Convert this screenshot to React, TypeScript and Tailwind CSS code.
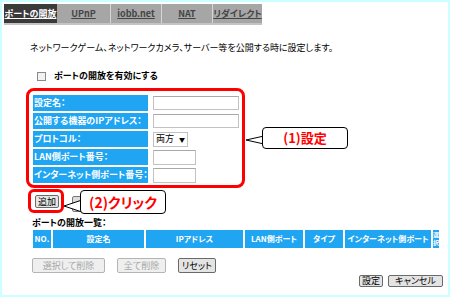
export default function App() {
  const rows = [
    { label: "設定名：", kind: "long" },
    { label: "公開する機器のIPアドレス：", kind: "long" },
    { label: "プロトコル：", kind: "select" },
    { label: "LAN側ポート番号：", kind: "short" },
    { label: "インターネット側ポート番号：", kind: "short" },
  ];
  return (
    <div className="relative w-[450px] h-[297px] overflow-hidden border-2 border-[#ccffff] bg-white text-black font-['Noto_Sans_CJK_JP',sans-serif] [font-feature-settings:'palt']">
      {/* tab bar */}
      <div className="mt-[2px] ml-[2px] w-[258px] h-[21px] flex bg-[#a6a6a6] border-b-2 border-[#c4c4c4] text-[9px] font-bold leading-[19px] whitespace-nowrap">
        <div className="w-[53px] bg-[#3a3a3a] text-white underline text-center">ポートの開放</div>
        <div className="w-[54px] text-center text-[#444] underline border-r border-[#d6d6d6]">UPnP</div>
        <div className="w-[51px] text-center text-[#444] underline border-r border-[#d6d6d6]">iobb.net</div>
        <div className="w-[51px] text-center text-[#444] underline border-r border-[#d6d6d6]">NAT</div>
        <div className="flex-1 text-center text-[#444] underline">リダイレクト</div>
      </div>

      <div className="mt-[17px] ml-[28px] text-[9px] leading-[12px]">
        ネットワークゲーム、ネットワークカメラ、サーバー等を公開する時に設定します。
      </div>

      <div className="mt-[16px] ml-[35px] flex items-center h-[12px] gap-[8px]">
        <div className="w-[9px] h-[9px] border border-[#8a8a8a] bg-[#f2f2f2]" />
        <span className="text-[9px] font-bold">ポートの開放を有効にする</span>
      </div>

      <div className="mt-[13px] ml-[31px] flex flex-col gap-[2px]">
        {rows.map((r) => (
          <div key={r.label} className="flex items-center h-[16px] gap-[5px]">
            <div className="w-[115px] h-[16px] bg-[#1fa5f2] text-white text-[9px] font-bold leading-[16px] pl-[1px] whitespace-nowrap">
              {r.label}
            </div>
            {r.kind === "long" && (
              <div className="w-[86px] h-[14px] border border-[#c2c2c2] border-t-[#a8a8a8] bg-white" />
            )}
            {r.kind === "short" && (
              <div className="w-[43px] h-[15px] border border-[#c2c2c2] border-t-[#a8a8a8] bg-white" />
            )}
            {r.kind === "select" && (
              <div className="w-[35px] h-[15px] border border-[#c2c2c2] bg-white flex items-center justify-between px-[2px] text-[9px]">
                <span>両方</span>
                <span className="text-[6px]">▼</span>
              </div>
            )}
          </div>
        ))}
      </div>

      <div className="mt-[12px] ml-[33px] w-[24px] h-[13px] border border-[#6a6a6a] rounded-[2px] bg-[#e6e6e6] text-[9px] leading-[11px] text-center">
        追加
      </div>

      <div className="mt-[9px] ml-[30px] text-[9px] font-bold leading-[12px]">ポートの開放一覧：</div>

      <div className="mt-[1px] ml-[31px] flex gap-[2px] h-[18px] text-white text-[8px] font-bold leading-[18px] text-center whitespace-nowrap">
        <div className="w-[18px] bg-[#1fa5f2]">NO.</div>
        <div className="w-[91px] bg-[#1fa5f2]">設定名</div>
        <div className="w-[97px] bg-[#1fa5f2]">IPアドレス</div>
        <div className="w-[58px] bg-[#1fa5f2]">LAN側ポート</div>
        <div className="w-[38px] bg-[#1fa5f2]">タイプ</div>
        <div className="w-[86px] bg-[#1fa5f2]">インターネット側ポート</div>
        <div className="w-[6px] bg-[#1fa5f2] overflow-hidden text-[6px] leading-[8px] flex flex-col items-center justify-center">
          <span className="block h-[8px]">選</span>
          <span className="block h-[8px]">択</span>
        </div>
      </div>

      <div className="mt-[10px] ml-[30px] flex gap-[12px] h-[15px] text-[9px] leading-[13px]">
        <div className="w-[73px] border border-[#b4b4b4] rounded-[2px] bg-[#efefef] text-[#a8a8a8] text-center">選択して削除</div>
        <div className="w-[49px] border border-[#b4b4b4] rounded-[2px] bg-[#efefef] text-[#a8a8a8] text-center">全て削除</div>
        <div className="w-[38px] border border-[#6a6a6a] rounded-[2px] bg-[#e4e4e4] text-black text-center">リセット</div>
      </div>

      <div className="mt-[2px] pr-[5px] flex justify-end gap-[5px] h-[12px] text-[9px] leading-[10px]">
        <div className="w-[24px] border border-[#6a6a6a] rounded-[2px] bg-[#e4e4e4] text-center">設定</div>
        <div className="w-[55px] border border-[#6a6a6a] rounded-[2px] bg-[#e4e4e4] text-center">キャンセル</div>
      </div>

      {/* annotations */}
      <div className="absolute left-[24px] top-[86px] w-[219px] h-[100px] border-[3px] border-[#ff0000] rounded-[8px]" />
      <svg className="absolute left-[242px] top-[128px]" width="22" height="20" viewBox="0 0 22 20">
        <path d="M20 6 L2 10 L20 14" fill="white" stroke="black" strokeWidth="1" />
      </svg>
      <div className="absolute left-[260px] top-[125px] w-[86px] h-[22px] border border-black rounded-[4px] bg-white text-[#ff0000] text-[13px] font-bold leading-[20px] text-center">
        (1)設定
      </div>

      <div className="absolute left-[70px] top-[194px] w-[10px] h-[16px] border border-[#777] rounded-[2px] bg-[#dcdcdc]" />
      <div className="absolute left-[26px] top-[187px] w-[36px] h-[24px] border-[3px] border-[#ff0000] rounded-[6px]" />
      <svg className="absolute left-[60px] top-[194px]" width="22" height="20" viewBox="0 0 22 20">
        <path d="M20 4 L2 10 L20 16" fill="white" stroke="black" strokeWidth="1" />
      </svg>
      <div className="absolute left-[78px] top-[188px] w-[86px] h-[24px] border border-black rounded-[4px] bg-white text-[#ff0000] text-[14px] font-bold leading-[22px] text-center">
        (2)クリック
      </div>
    </div>
  );
}
